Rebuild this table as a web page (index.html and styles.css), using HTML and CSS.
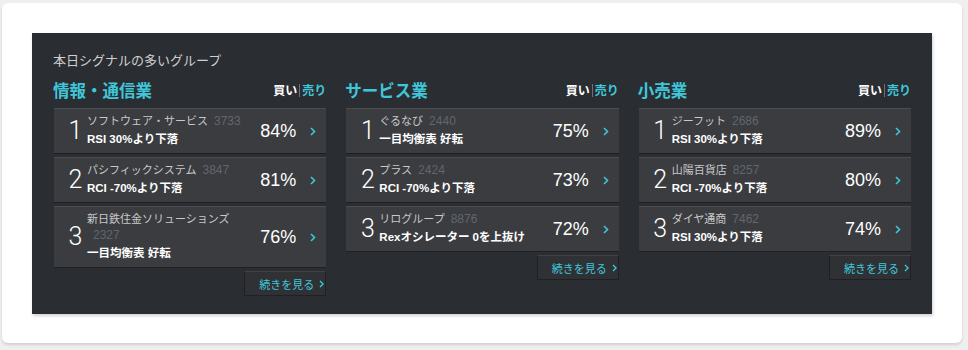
FILE: index.html
```html
<!DOCTYPE html>
<html lang="ja">
<head>
<meta charset="utf-8">
<title>本日シグナルの多いグループ</title>
<link rel="stylesheet" href="styles.css">
</head>
<body>
<div class="frame">
  <div class="panel">
    <div class="title">本日シグナルの多いグループ</div>
    <div class="cols">
      <section class="col">
        <div class="col-head">
          <h2>情報・通信業</h2>
          <div class="tabs"><span class="buy">買い</span><span class="sep"></span><span class="sell">売り</span></div>
        </div>
        <ul class="list">
          <li class="item"><span class="rank">1</span><div class="info"><div class="name">ソフトウェア・サービス<span class="code">3733</span></div><div class="signal">RSI 30%より下落</div></div><span class="pct">84%</span><svg class="chev" width="6" height="9" viewBox="0 0 6 9"><polyline points="1,1 4.5,4.5 1,8" fill="none" stroke="#3cc6d6" stroke-width="1.6"/></svg></li>
          <li class="item"><span class="rank">2</span><div class="info"><div class="name">パシフィックシステム<span class="code">3847</span></div><div class="signal">RCI -70%より下落</div></div><span class="pct">81%</span><svg class="chev" width="6" height="9" viewBox="0 0 6 9"><polyline points="1,1 4.5,4.5 1,8" fill="none" stroke="#3cc6d6" stroke-width="1.6"/></svg></li>
          <li class="item"><span class="rank">3</span><div class="info"><div class="name">新日鉄住金ソリューションズ<span class="code">2327</span></div><div class="signal">一目均衡表 好転</div></div><span class="pct">76%</span><svg class="chev" width="6" height="9" viewBox="0 0 6 9"><polyline points="1,1 4.5,4.5 1,8" fill="none" stroke="#3cc6d6" stroke-width="1.6"/></svg></li>
        </ul>
        <div class="more-row"><a class="more" href="#">続きを見る<svg class="more-chev" width="5" height="8" viewBox="0 0 5 8"><polyline points="1,1 4,4 1,7" fill="none" stroke="#3cc6d6" stroke-width="1.4"/></svg></a></div>
      </section>
      <section class="col">
        <div class="col-head">
          <h2>サービス業</h2>
          <div class="tabs"><span class="buy">買い</span><span class="sep"></span><span class="sell">売り</span></div>
        </div>
        <ul class="list">
          <li class="item"><span class="rank">1</span><div class="info"><div class="name">ぐるなび<span class="code">2440</span></div><div class="signal">一目均衡表 好転</div></div><span class="pct">75%</span><svg class="chev" width="6" height="9" viewBox="0 0 6 9"><polyline points="1,1 4.5,4.5 1,8" fill="none" stroke="#3cc6d6" stroke-width="1.6"/></svg></li>
          <li class="item"><span class="rank">2</span><div class="info"><div class="name">プラス<span class="code">2424</span></div><div class="signal">RCI -70%より下落</div></div><span class="pct">73%</span><svg class="chev" width="6" height="9" viewBox="0 0 6 9"><polyline points="1,1 4.5,4.5 1,8" fill="none" stroke="#3cc6d6" stroke-width="1.6"/></svg></li>
          <li class="item"><span class="rank">3</span><div class="info"><div class="name">リログループ<span class="code">8876</span></div><div class="signal">Rexオシレーター 0を上抜け</div></div><span class="pct">72%</span><svg class="chev" width="6" height="9" viewBox="0 0 6 9"><polyline points="1,1 4.5,4.5 1,8" fill="none" stroke="#3cc6d6" stroke-width="1.6"/></svg></li>
        </ul>
        <div class="more-row"><a class="more" href="#">続きを見る<svg class="more-chev" width="5" height="8" viewBox="0 0 5 8"><polyline points="1,1 4,4 1,7" fill="none" stroke="#3cc6d6" stroke-width="1.4"/></svg></a></div>
      </section>
      <section class="col">
        <div class="col-head">
          <h2>小売業</h2>
          <div class="tabs"><span class="buy">買い</span><span class="sep"></span><span class="sell">売り</span></div>
        </div>
        <ul class="list">
          <li class="item"><span class="rank">1</span><div class="info"><div class="name">ジーフット<span class="code">2686</span></div><div class="signal">RSI 30%より下落</div></div><span class="pct">89%</span><svg class="chev" width="6" height="9" viewBox="0 0 6 9"><polyline points="1,1 4.5,4.5 1,8" fill="none" stroke="#3cc6d6" stroke-width="1.6"/></svg></li>
          <li class="item"><span class="rank">2</span><div class="info"><div class="name">山陽百貨店<span class="code">8257</span></div><div class="signal">RCI -70%より下落</div></div><span class="pct">80%</span><svg class="chev" width="6" height="9" viewBox="0 0 6 9"><polyline points="1,1 4.5,4.5 1,8" fill="none" stroke="#3cc6d6" stroke-width="1.6"/></svg></li>
          <li class="item"><span class="rank">3</span><div class="info"><div class="name">ダイヤ通商<span class="code">7462</span></div><div class="signal">RSI 30%より下落</div></div><span class="pct">74%</span><svg class="chev" width="6" height="9" viewBox="0 0 6 9"><polyline points="1,1 4.5,4.5 1,8" fill="none" stroke="#3cc6d6" stroke-width="1.6"/></svg></li>
        </ul>
        <div class="more-row"><a class="more" href="#">続きを見る<svg class="more-chev" width="5" height="8" viewBox="0 0 5 8"><polyline points="1,1 4,4 1,7" fill="none" stroke="#3cc6d6" stroke-width="1.4"/></svg></a></div>
      </section>
    </div>
  </div>
</div>
</body>
</html>
```

FILE: styles.css
```css
* { box-sizing: border-box; }
html, body { margin: 0; padding: 0; }
body {
  background: #efefef;
  font-family: "Noto Sans CJK JP", "Liberation Sans", sans-serif;
  width: 968px;
  height: 350px;
  overflow: hidden;
}
.frame {
  margin: 3px 0 0 2px;
  width: 960px;
  height: 340px;
  background: #fff;
  border-radius: 6px;
  box-shadow: 0 2px 3px rgba(0,0,0,0.13);
  padding: 30px;
}
.panel {
  width: 900px;
  height: 281px;
  background: #2a2d32;
  box-shadow: 1px 2px 3px rgba(0,0,0,0.18);
  padding: 19px 21px 0 22px;
}
.title {
  color: #cfcfcf;
  font-size: 13px;
  line-height: 16px;
  margin-left: -1px;
}
.cols {
  display: grid;
  grid-template-columns: 1fr 1fr 1fr;
  column-gap: 20px;
  margin-top: 12px;
}
.col-head {
  display: flex;
  justify-content: space-between;
  align-items: center;
  height: 20px;
  margin-bottom: 8px;
}
.col-head h2 {
  margin: 0 0 0 -1px;
  font-size: 16.5px;
  font-weight: bold;
  color: #3fc7d9;
  line-height: 20px;
}
.tabs {
  display: flex;
  align-items: center;
  font-size: 12px;
  font-weight: bold;
  line-height: 16px;
}
.buy { color: #fff; }
.sell { color: #3fc7d9; }
.sep {
  display: inline-block;
  width: 1px;
  height: 13px;
  background: #6b6f76;
  margin: 0 2px;
}
.list {
  list-style: none;
  margin: 0;
  padding: 0;
}
.item {
  display: flex;
  align-items: center;
  background: #3a3c40;
  border-top: 1px solid #4b4d51;
  box-shadow: 0 1px 0 #1e2023;
  margin-bottom: 4px;
  padding: 0 10px 0 10px;
  min-height: 44px;
}
.rank {
  width: 23px;
  text-align: center;
  font-family: Roboto, "Liberation Sans", sans-serif;
  font-weight: 300;
  font-size: 25px;
  color: #fff;
  line-height: 28px;
  flex: none;
}
.info {
  flex: 1;
  min-width: 0;
  padding: 3px 0 6px;
  margin-right: 8px;
}
.name {
  color: #c9c9c9;
  font-size: 11px;
  line-height: 16px;
}
.code {
  color: #61666f;
  font-family: "Liberation Sans", sans-serif;
  font-size: 12px;
  margin-left: 6px;
}
.signal {
  color: #fff;
  font-family: "Liberation Sans", "Noto Sans CJK JP", sans-serif;
  font-size: 11.5px;
  font-weight: bold;
  line-height: 16px;
  margin-top: 2px;
}
.pct {
  font-family: "Liberation Sans", sans-serif;
  font-size: 18px;
  color: #fff;
  flex: none;
  margin-right: 14px;
}
.chev {
  flex: none;
  display: block;
}
.more-row {
  display: flex;
  justify-content: flex-end;
}
.more {
  display: flex;
  align-items: center;
  width: 82px;
  height: 25px;
  padding-left: 14px;
  background: #2f3135;
  border: 1px solid #1f2124;
  border-top-color: #404246;
  color: #3fc7d9;
  font-size: 11px;
  text-decoration: none;
}
.more-chev {
  margin-left: 5px;
  display: block;
}
```
